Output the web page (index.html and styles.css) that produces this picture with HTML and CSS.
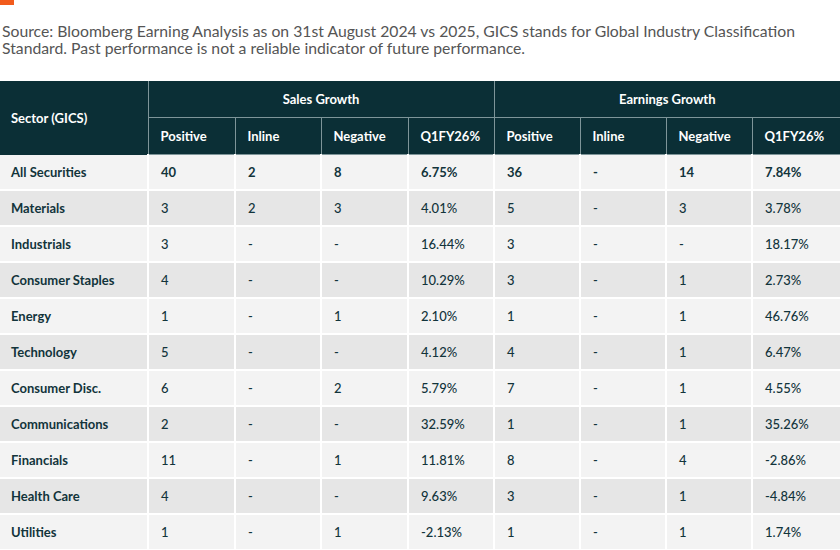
FILE: index.html
```html
<!DOCTYPE html>
<html>
<head>
<meta charset="utf-8">
<link rel="stylesheet" href="styles.css">
</head>
<body>
<div class="accent"></div>
<p class="source">Source: Bloomberg Earning Analysis as on 31st August 2024 vs 2025, GICS stands for Global Industry Classification Standard. Past performance is not a reliable indicator of future performance.</p>
<table class="growth">
  <colgroup>
    <col class="c-sector"><col class="c-a"><col class="c-b"><col class="c-a"><col class="c-b"><col class="c-b"><col class="c-b"><col class="c-b"><col>
  </colgroup>
  <thead>
    <tr>
      <th rowspan="2" class="h-sector">Sector (GICS)</th>
      <th colspan="4" class="h-group">Sales Growth</th>
      <th colspan="4" class="h-group">Earnings Growth</th>
    </tr>
    <tr>
      <th>Positive</th><th>Inline</th><th>Negative</th><th>Q1FY26%</th>
      <th>Positive</th><th>Inline</th><th>Negative</th><th>Q1FY26%</th>
    </tr>
  </thead>
  <tbody>
    <tr class="total"><td class="sector">All Securities</td><td>40</td><td>2</td><td>8</td><td>6.75%</td><td>36</td><td>-</td><td>14</td><td>7.84%</td></tr>
    <tr><td class="sector">Materials</td><td>3</td><td>2</td><td>3</td><td>4.01%</td><td>5</td><td>-</td><td>3</td><td>3.78%</td></tr>
    <tr><td class="sector">Industrials</td><td>3</td><td>-</td><td>-</td><td>16.44%</td><td>3</td><td>-</td><td>-</td><td>18.17%</td></tr>
    <tr><td class="sector">Consumer Staples</td><td>4</td><td>-</td><td>-</td><td>10.29%</td><td>3</td><td>-</td><td>1</td><td>2.73%</td></tr>
    <tr><td class="sector">Energy</td><td>1</td><td>-</td><td>1</td><td>2.10%</td><td>1</td><td>-</td><td>1</td><td>46.76%</td></tr>
    <tr><td class="sector">Technology</td><td>5</td><td>-</td><td>-</td><td>4.12%</td><td>4</td><td>-</td><td>1</td><td>6.47%</td></tr>
    <tr><td class="sector">Consumer Disc.</td><td>6</td><td>-</td><td>2</td><td>5.79%</td><td>7</td><td>-</td><td>1</td><td>4.55%</td></tr>
    <tr><td class="sector">Communications</td><td>2</td><td>-</td><td>-</td><td>32.59%</td><td>1</td><td>-</td><td>1</td><td>35.26%</td></tr>
    <tr><td class="sector">Financials</td><td>11</td><td>-</td><td>1</td><td>11.81%</td><td>8</td><td>-</td><td>4</td><td>-2.86%</td></tr>
    <tr><td class="sector">Health Care</td><td>4</td><td>-</td><td>-</td><td>9.63%</td><td>3</td><td>-</td><td>1</td><td>-4.84%</td></tr>
    <tr><td class="sector">Utilities</td><td>1</td><td>-</td><td>1</td><td>-2.13%</td><td>1</td><td>-</td><td>1</td><td>1.74%</td></tr>
  </tbody>
</table>
</body>
</html>
```

FILE: styles.css
```css
html, body {
  margin: 0;
  padding: 0;
  background: #ffffff;
}
body {
  width: 840px;
  font-family: Lato, "Liberation Sans", sans-serif;
}
.accent {
  width: 14px;
  height: 5px;
  background: #f25b1c;
}
.source {
  margin: 17px 0 0 2px;
  font-size: 15.75px;
  line-height: 17px;
  color: #555555;
  width: 820px;
}
.growth {
  margin-top: 25px;
  width: 840px;
  table-layout: fixed;
  border-collapse: collapse;
  font-size: 13px;
  color: #12343b;
}
.c-sector { width: 148px; }
.c-a { width: 87px; }
.c-b { width: 86px; }
.growth th {
  background: #0b2f36;
  color: #ffffff;
  font-weight: 700;
  height: 36px;
  padding: 0 0 0 12px;
  text-align: left;
  border: 1px solid #7e9599;
  border-top: none;
}
.growth th:first-child { border-left: none; }
.growth th:last-child { border-right: none; }
.growth .h-sector { padding-left: 11px; border-bottom: none; }
.growth .h-group { text-align: center; padding: 0; }
.growth td {
  height: 34px;
  padding: 0 0 0 12px;
  border: 2px solid #ffffff;
  background: #f3f3f3;
  font-weight: 500;
}
.growth td:first-child { border-left: none; }
.growth td:last-child { border-right: none; }
.growth tbody tr:first-child td { border-top: none; }
.growth tbody tr:nth-child(even) td { background: #e6e6e6; }
.growth td.sector {
  font-weight: 700;
  padding-left: 11px;
}
.growth tr.total td { font-weight: 700; }
```
